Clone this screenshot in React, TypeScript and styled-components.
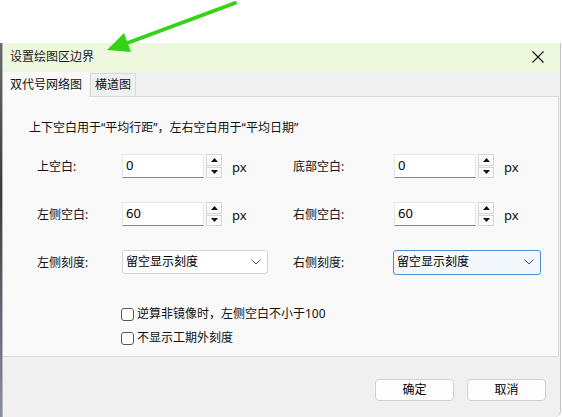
import React from "react";
import styled, { createGlobalStyle } from "styled-components";

const Global = createGlobalStyle`
  html, body { margin: 0; padding: 0; background: #ffffff; }
  body { font-family: "Noto Sans", "Noto Sans CJK SC", sans-serif; font-size: 12px; color: #000; }
  * { box-sizing: border-box; }
`;

const Page = styled.div`
  position: relative;
  width: 562px;
  height: 417px;
  overflow: hidden;
  background: #ffffff;
  display: flex;
  flex-direction: column;
`;

const TopGap = styled.div`
  height: 43px;
  flex: none;
`;

const Desk = styled.div`
  flex: 1;
  display: flex;
  min-height: 0;
`;

const BackStrip = styled.div`
  width: 2px;
  background: linear-gradient(#6b6b6b, #3a3a3a 40%, #8a8fa0);
  flex: none;
`;

const Dialog = styled.div`
  width: 559px;
  flex: none;
  display: flex;
  flex-direction: column;
  background: #f0f0f0;
  border-left: 1px solid #b8b8b8;
  border-right: 1px solid #c4c4c4;
  border-bottom-right-radius: 6px;
  overflow: hidden;
`;

const TitleBar = styled.div`
  height: 28px;
  flex: none;
  display: flex;
  align-items: center;
  justify-content: space-between;
  background: #eef8df;
  padding: 0 8px 0 7px;
`;

const Title = styled.span`
  font-size: 12px;
  line-height: 16px;
  color: #1a1a1a;
`;

const CloseBtn = styled.div`
  width: 28px;
  height: 24px;
  display: flex;
  align-items: center;
  justify-content: center;
`;

const Tabs = styled.div`
  display: flex;
  align-items: flex-end;
  height: 25px;
  flex: none;
  position: relative;
  z-index: 1;
`;

const Tab = styled.div<{ $active?: boolean }>`
  height: ${(p) => (p.$active ? "25px" : "23px")};
  padding: 0 ${(p) => (p.$active ? "6px" : "4px")};
  display: flex;
  align-items: center;
  white-space: nowrap;
  flex: none;
  background: ${(p) => (p.$active ? "#f9f9f9" : "#f0f0f0")};
  border: 1px solid ${(p) => (p.$active ? "#f9f9f9" : "#d9d9d9")};
  border-bottom: none;
  margin-left: ${(p) => (p.$active ? "0" : "1px")};
  margin-bottom: ${(p) => (p.$active ? "-1px" : "0")};
  font-size: 12px;
  line-height: 16px;
  color: #111;
`;

const Panel = styled.div`
  height: 261px;
  flex: none;
  margin-right: 1px;
  background: #f9f9f9;
  border: 1px solid #dadada;
  border-left: none;
  display: flex;
  flex-direction: column;
  padding: 23px 0 0 26px;
`;

const Hint = styled.div`
  font-size: 12px;
  line-height: 16px;
  color: #111;
`;

const Grid = styled.div`
  margin-top: 18px;
  margin-left: 8px;
  display: grid;
  grid-template-columns: 85px 171px 101px auto;
  grid-auto-rows: 24px;
  row-gap: 24px;
  align-items: center;
`;

const Label = styled.div`
  font-size: 12px;
  line-height: 16px;
  color: #111;
  padding-top: 2px;
`;

const Field = styled.div`
  display: flex;
  align-items: center;
  height: 24px;
`;

const Input = styled.div`
  width: 82px;
  height: 24px;
  background: #ffffff;
  border: 1px solid #e6e6e6;
  border-bottom: 1px solid #858585;
  border-radius: 2px 2px 0 0;
  padding: 2px 0 0 3px;
  font-size: 13px;
  line-height: 16px;
  color: #000;
`;

const Spin = styled.div`
  margin-left: 2px;
  width: 16px;
  height: 24px;
  display: flex;
  flex-direction: column;
  gap: 1px;
`;

const SpinBtn = styled.div`
  flex: 1;
  background: #fbfbfb;
  border: 1px solid #d6d6d6;
  display: flex;
  align-items: center;
  justify-content: center;
`;

const Unit = styled.span`
  margin-left: 10px;
  font-size: 13px;
  line-height: 16px;
  color: #111;
  padding-top: 2px;
`;

const Combo = styled.div<{ $focus?: boolean }>`
  width: ${(p) => (p.$focus ? "148px" : "146px")};
  height: ${(p) => (p.$focus ? "25px" : "24px")};
  margin-left: ${(p) => (p.$focus ? "-1px" : "0")};
  background: ${(p) => (p.$focus ? "#f3f8fd" : "#ffffff")};
  border: 1px solid ${(p) => (p.$focus ? "#4c8fd6" : "#d3d3d3")};
  border-radius: 3px;
  display: flex;
  align-items: center;
  justify-content: space-between;
  padding: 0 6px 0 3px;
  font-size: 12px;
  line-height: 16px;
  color: #000;
`;

const Checks = styled.div`
  margin-top: 28px;
  margin-left: 92px;
  display: flex;
  flex-direction: column;
`;

const CheckRow = styled.label`
  height: 24px;
  display: flex;
  align-items: center;
  gap: 3px;
  font-size: 12px;
  line-height: 16px;
  color: #111;
`;

const Box = styled.span`
  width: 13px;
  height: 13px;
  border: 1px solid #5a5a5a;
  border-radius: 3px;
  background: #ffffff;
  flex: none;
`;

const Footer = styled.div`
  flex: 1;
  display: flex;
  justify-content: flex-end;
  align-items: flex-start;
  gap: 13px;
  padding: 22px 14px 0 0;
`;

const Button = styled.div`
  width: 79px;
  height: 22px;
  background: #fdfdfd;
  border: 1px solid #d0d0d0;
  border-radius: 4px;
  display: flex;
  align-items: center;
  justify-content: center;
  font-size: 12px;
  line-height: 16px;
  color: #000;
`;

const Arrow = styled.svg`
  position: absolute;
  left: 0;
  top: 0;
  pointer-events: none;
`;

const Up = () => (
  <svg width="7" height="4" viewBox="0 0 7 4">
    <path d="M0 4 L3.5 0 L7 4 Z" fill="#111" />
  </svg>
);
const Down = () => (
  <svg width="7" height="4" viewBox="0 0 7 4">
    <path d="M0 0 L3.5 4 L7 0 Z" fill="#111" />
  </svg>
);
const Chevron = () => (
  <svg width="10" height="6" viewBox="0 0 10 6">
    <path d="M0.5 0.5 L5 5 L9.5 0.5" fill="none" stroke="#555" strokeWidth="1" />
  </svg>
);

const NumField = ({ value }: { value: string }) => (
  <Field>
    <Input>{value}</Input>
    <Spin>
      <SpinBtn><Up /></SpinBtn>
      <SpinBtn><Down /></SpinBtn>
    </Spin>
    <Unit>px</Unit>
  </Field>
);

export default function App() {
  return (
    <>
      <Global />
      <Page>
        <TopGap />
        <Desk>
          <BackStrip />
          <Dialog>
            <TitleBar>
              <Title>设置绘图区边界</Title>
              <CloseBtn>
                <svg width="12" height="12" viewBox="0 0 12 12">
                  <path d="M0.5 0.5 L11.5 11.5 M11.5 0.5 L0.5 11.5" stroke="#111" strokeWidth="1.1" />
                </svg>
              </CloseBtn>
            </TitleBar>
            <Tabs>
              <Tab $active>双代号网络图</Tab>
              <Tab>横道图</Tab>
            </Tabs>
            <Panel>
              <Hint>上下空白用于“平均行距”，左右空白用于“平均日期”</Hint>
              <Grid>
                <Label>上空白:</Label>
                <NumField value="0" />
                <Label>底部空白:</Label>
                <NumField value="0" />
                <Label>左侧空白:</Label>
                <NumField value="60" />
                <Label>右侧空白:</Label>
                <NumField value="60" />
                <Label>左侧刻度:</Label>
                <Field>
                  <Combo>
                    <span>留空显示刻度</span>
                    <Chevron />
                  </Combo>
                </Field>
                <Label>右侧刻度:</Label>
                <Field>
                  <Combo $focus>
                    <span>留空显示刻度</span>
                    <Chevron />
                  </Combo>
                </Field>
              </Grid>
              <Checks>
                <CheckRow><Box />逆算非镜像时，左侧空白不小于100</CheckRow>
                <CheckRow><Box />不显示工期外刻度</CheckRow>
              </Checks>
            </Panel>
            <Footer>
              <Button>确定</Button>
              <Button>取消</Button>
            </Footer>
          </Dialog>
        </Desk>
        <Arrow width="562" height="80" viewBox="0 0 562 80">
          <line x1="235" y1="3" x2="122" y2="45" stroke="#33d416" strokeWidth="4" strokeLinecap="round" />
          <path d="M107 50 L124 33 L131 52 Z" fill="#33d416" />
        </Arrow>
      </Page>
    </>
  );
}
